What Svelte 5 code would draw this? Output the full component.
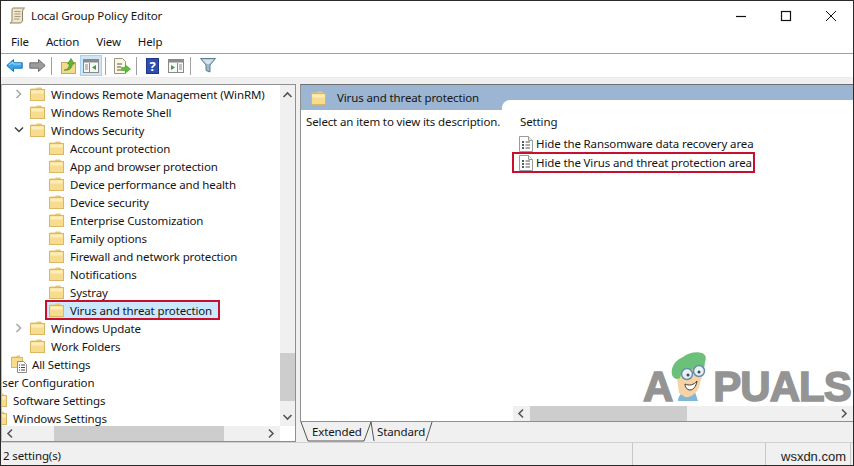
<script>
	const menus = ['File', 'Action', 'View', 'Help'];

	// level is the tree depth relative to "Windows Remote Management"; the tree is scrolled so some are cut off
	const rows = [
		{ label: 'Windows Remote Management (WinRM)', level: 0, arrow: 'closed' },
		{ label: 'Windows Remote Shell', level: 0 },
		{ label: 'Windows Security', level: 0, arrow: 'open' },
		{ label: 'Account protection', level: 1 },
		{ label: 'App and browser protection', level: 1 },
		{ label: 'Device performance and health', level: 1 },
		{ label: 'Device security', level: 1 },
		{ label: 'Enterprise Customization', level: 1 },
		{ label: 'Family options', level: 1 },
		{ label: 'Firewall and network protection', level: 1 },
		{ label: 'Notifications', level: 1 },
		{ label: 'Systray', level: 1 },
		{ label: 'Virus and threat protection', level: 1, selected: true },
		{ label: 'Windows Update', level: 0, arrow: 'closed' },
		{ label: 'Work Folders', level: 0 },
		{ label: 'All Settings', level: -1, icon: 'settings' },
		{ label: 'User Configuration', level: -3 },
		{ label: 'Software Settings', level: -2 },
		{ label: 'Windows Settings', level: -2 }
	];

	const settings = [
		{ label: 'Hide the Ransomware data recovery area' },
		{ label: 'Hide the Virus and threat protection area', marked: true }
	];
</script>

{#snippet folder()}
	<svg class="folder" width="15" height="14" viewBox="0 0 15 14">
		<path d="M1 3V1.500h5L7 .5h4l1 1V3z" fill="#e8c877" />
		<rect x=".5" y="2.500" width="14" height="11" fill="#f7dc90" stroke="#d9b765" />
		<rect x="1.500" y="3.500" width="12" height="3" fill="#fdeeb9" />
	</svg>
{/snippet}

{#snippet policy()}
	<svg class="policy" width="14" height="16" viewBox="0 0 14 16">
		<path d="M.5.500h9l4 4v11H.5z" fill="#fff" stroke="#9b9b9b" />
		<path d="M9.500.500v4h4" fill="#eee" stroke="#9b9b9b" />
		<path d="M3 6h2M3 9h2M3 12h2" stroke="#1d2a3a" stroke-width="1.600" />
		<path d="M6.500 6h4.500M6.500 9h4.500M6.500 12h4.500" stroke="#50585f" />
	</svg>
{/snippet}

<div class="window">
	<header class="titlebar">
		<svg width="17" height="17" viewBox="0 0 17 17">
			<path d="M4 1h11.500c-1.500 1-2 2.500-2 4v8c0 1.500-1 3-2.500 3H1c1.500-.5 2-1.500 2-3V3c0-1 .5-2 1-2z" fill="#f1e6c6" stroke="#8b8268" />
			<path d="M5.500 4.500h6M5.500 7h6M5.500 9.500h6M5 12h5.500" stroke="#a39a80" />
		</svg>
		<span class="title">Local Group Policy Editor</span>
		<div class="controls">
			<svg width="12" height="12" viewBox="0 0 12 12"><path d="M1 6.500h10" stroke="#111" stroke-width="1.200" /></svg>
			<svg width="12" height="12" viewBox="0 0 12 12"><rect x="1.500" y="1.500" width="9" height="9" fill="none" stroke="#111" stroke-width="1.200" /></svg>
			<svg width="12" height="12" viewBox="0 0 12 12"><path d="M1 1l10 10M11 1L1 11" stroke="#111" stroke-width="1" /></svg>
		</div>
	</header>

	<nav class="menubar">
		{#each menus as menu}
			<span>{menu}</span>
		{/each}
	</nav>

	<div class="toolbar">
		<svg class="tool" width="17" height="15" viewBox="0 0 17 15">
			<path d="M.8 7.500L7.500 1.500v3.300h8.700v5.400H7.500v3.300z" fill="#3aa6ec" stroke="#1573b8" />
			<path d="M3 7L7 4v2h8" fill="none" stroke="#a8e0fb" />
		</svg>
		<svg class="tool fwd" width="17" height="15" viewBox="0 0 17 15">
			<path d="M16.200 7.500L9.500 1.500v3.300H.8v5.400h8.700v3.300z" fill="#9c9c9c" stroke="#6d6d6d" />
		</svg>
		<i class="sep s1"></i>
		<svg class="tool up" width="15" height="17" viewBox="0 0 15 17">
			<rect x=".5" y="5.500" width="14" height="11" fill="#f3d98c" stroke="#c9a85a" />
			<path d="M3 13c3 0 5-2 5.500-6H6.500L10 1.500 13.500 7h-2c-.5 4-3 7-8.500 6z" fill="#5fb336" stroke="#3f8a22" stroke-width=".6" />
		</svg>
		<div class="active-btn">
			<svg width="16" height="14" viewBox="0 0 16 14">
				<rect x=".5" y=".5" width="15" height="13" fill="#f7f7f7" stroke="#8a8a8a" />
				<rect x="1" y="1" width="14" height="2.500" fill="#8a8a8a" />
				<path d="M6.500 4v9" stroke="#8a8a8a" />
				<path d="M2 6h3M2 8h3M2 10h3" stroke="#8a8a8a" />
				<path d="M13 6v5L9 8.500z" fill="#3d9c3d" />
			</svg>
		</div>
		<i class="sep s2"></i>
		<svg class="tool export" width="17" height="16" viewBox="0 0 17 16">
			<path d="M.5.500h8l3 3v12H.5z" fill="#fbf6e2" stroke="#9b9684" />
			<path d="M3 6h5M3 9h4M3 12h4" stroke="#56584c" />
			<path d="M7.500 9.500h4v-2.500l5 4-5 4v-2.500h-4z" fill="#5fbf3c" stroke="#3f9a26" stroke-width=".6" />
		</svg>
		<i class="sep s3"></i>
		<div class="help">?</div>
		<svg class="tool show" width="16" height="14" viewBox="0 0 16 14">
			<rect x=".5" y=".5" width="15" height="13" fill="#f7f7f7" stroke="#8a8a8a" />
			<rect x="1" y="1" width="14" height="2.500" fill="#8a8a8a" />
			<path d="M9.500 4v9" stroke="#8a8a8a" />
			<path d="M11 6h3M11 8h3M11 10h3" stroke="#8a8a8a" />
			<path d="M3 6v5l4-2.500z" fill="#3d9c3d" />
		</svg>
		<i class="sep s4"></i>
		<svg class="tool filter" width="16" height="15" viewBox="0 0 16 15">
			<path d="M.5.500h15L10 7v7l-4-1.500V7z" fill="#9fb9c9" stroke="#5d7f95" />
			<path d="M2.500 1.500h11L9.500 6h-3z" fill="#d5e4ec" />
		</svg>
	</div>

	<main class="main">
		<section class="tree">
			<div class="tree-body">
				<div class="tree-rows">
					{#each rows as row}
						<div class="row" style="margin-left: {row.level * 19 + 9}px">
							<span class="arrow">
								{#if row.arrow === 'closed'}
									<svg width="8" height="10" viewBox="0 0 8 10"><path d="M1.500 1l4 4-4 4" fill="none" stroke="#a6a6a6" stroke-width="1.500" /></svg>
								{:else if row.arrow === 'open'}
									<svg width="10" height="8" viewBox="0 0 10 8"><path d="M1 1.500l4 4 4-4" fill="none" stroke="#404040" stroke-width="1.500" /></svg>
								{/if}
							</span>
							<div class="entry" class:selected={row.selected}>
								{#if row.icon === 'settings'}
									<svg class="settings-icon" width="17" height="18" viewBox="0 0 17 18">
										<path d="M1 4V1.500h4l1-1h3v3.500z" fill="#e8c877" />
										<rect x=".5" y="2.500" width="11" height="10" fill="#f7dc90" stroke="#d9b765" />
										<path d="M6.500 6.500h6l3 3v8h-9z" fill="#fff" stroke="#8d8d8d" />
										<path d="M8 10h1M8 12.500h1M8 15h1M10 10h4M10 12.500h4M10 15h4" stroke="#444" />
									</svg>
								{:else}
									{@render folder()}
								{/if}
								<span class="label">{row.label}</span>
							</div>
						</div>
					{/each}
				</div>
				<div class="vscroll">
					<svg width="15" height="16" viewBox="0 0 15 16"><path d="M3.500 12l4-4 4 4" fill="none" stroke="#555" stroke-width="1.600" /></svg>
					<div class="vtrack"><div class="vthumb"></div></div>
					<svg width="15" height="16" viewBox="0 0 15 16"><path d="M3.500 5l4 4 4-4" fill="none" stroke="#555" stroke-width="1.600" /></svg>
				</div>
			</div>
			<div class="hscroll tree-h">
				<svg width="17" height="15" viewBox="0 0 17 15"><path d="M10 3.500l-4 4 4 4" fill="none" stroke="#555" stroke-width="1.600" /></svg>
				<div class="htrack"><div class="hthumb"></div></div>
				<svg width="17" height="15" viewBox="0 0 17 15"><path d="M6 3.500l4 4-4 4" fill="none" stroke="#555" stroke-width="1.600" /></svg>
			</div>
		</section>

		<section class="detail">
			<div class="detail-box">
				<div class="detail-head">
					{@render folder()}
					<span>Virus and threat protection</span>
				</div>
				<div class="detail-body">
					<div class="description">Select an item to view its description.</div>
					<div class="list">
						<div class="list-head">Setting</div>
						{#each settings as item}
							<div class="item" class:marked={item.marked}>
								{@render policy()}
								<span>{item.label}</span>
							</div>
						{/each}
						<div class="logo">
							<span class="logo-a">A</span>
							<svg class="mascot" width="42" height="50" viewBox="0 0 42 50">
								<path d="M8 50c0-4 2-7 5-8l12-1 3 9z" fill="#7fb7d8" />
								<path d="M6 20l3 22 6 4c6 1 12-4 14-10l5-18z" fill="#f6d3a7" />
								<path d="M2 24C0 14 8 8 13 6c5-4 13-6 19-4 3 1 5 4 3 9l-1 7c-6-1-15 1-22 3l-2 6c-3 2-6 1-8-3z" fill="#6cc17a" />
								<circle cx="17" cy="23" r="5.500" fill="#e6f2f8" stroke="#6b8da3" stroke-width="1.500" />
								<circle cx="29" cy="20" r="5.500" fill="#e6f2f8" stroke="#6b8da3" stroke-width="1.500" />
								<circle cx="18" cy="24" r="1.500" fill="#3d4a55" />
								<circle cx="29" cy="21" r="1.500" fill="#3d4a55" />
								<path d="M15 33c4 2 9 1 12-3-1 6-4 9-7 9-3 0-5-3-5-6z" fill="#fff" stroke="#4a3a30" />
							</svg>
							<span class="logo-rest">PUALS</span>
						</div>
						<div class="hscroll list-h">
							<svg width="17" height="15" viewBox="0 0 17 15"><path d="M10 3.500l-4 4 4 4" fill="none" stroke="#555" stroke-width="1.600" /></svg>
							<div class="htrack"><div class="hthumb"></div></div>
							<svg width="17" height="15" viewBox="0 0 17 15"><path d="M6 3.500l4 4-4 4" fill="none" stroke="#555" stroke-width="1.600" /></svg>
						</div>
					</div>
				</div>
			</div>
			<div class="tabs">
				<svg class="tab-lines" width="140" height="20" viewBox="0 0 140 20">
					<path d="M1 0l7 19h56l7-19" fill="none" stroke="#555" />
					<path d="M71 0l3 19M132 0l-6 19" fill="none" stroke="#555" />
				</svg>
				<span class="tab one">Extended</span>
				<span class="tab two">Standard</span>
			</div>
		</section>
	</main>

	<footer class="status">
		<span class="status-main">2 setting(s)</span>
		<span class="status-cell"></span>
		<span class="status-cell site">wsxdn.com</span>
		<span class="status-end"></span>
	</footer>
</div>

<style>
	:global(body) {
		margin: 0;
		background: #fff;
	}

	.window {
		width: 854px;
		height: 466px;
		box-sizing: border-box;
		border: 1px solid #2a2a2a;
		display: flex;
		flex-direction: column;
		background: #fff;
		font-family: 'Noto Sans', 'Open Sans', sans-serif;
		font-size: 11.5px;
		letter-spacing: -0.13px;
		color: #151515;
		overflow: hidden;
	}

	.titlebar {
		height: 29px;
		padding-bottom: 2px;
		flex: none;
		display: flex;
		align-items: center;
		padding-left: 8px;
	}

	.title {
		margin-left: 5px;
	}

	.controls {
		margin-left: auto;
		display: flex;
		gap: 33px;
		padding-right: 16px;
	}

	.menubar {
		height: 19px;
		padding-bottom: 2px;
		flex: none;
		display: flex;
		align-items: center;
		gap: 17px;
		padding-left: 10px;
		border-bottom: 1px solid #a0a0a0;
	}

	.toolbar {
		height: 23px;
		flex: none;
		display: flex;
		align-items: center;
		padding-left: 5px;
		border-bottom: 1px solid #ececec;
	}

	.tool {
		flex: none;
	}

	.fwd {
		margin-left: 6px;
	}

	.sep {
		width: 1px;
		height: 18px;
		background: #a0a0a0;
		flex: none;
	}

	.s1 {
		margin-left: 5px;
	}

	.s2 {
		margin-left: 3px;
	}

	.s3 {
		margin-left: 5px;
	}

	.s4 {
		margin-left: 6px;
	}

	.up {
		margin-left: 9px;
	}

	.active-btn {
		width: 22px;
		height: 21px;
		margin-left: 4px;
		background: #cfe6f8;
		border: 1px solid #a6d2f2;
		box-sizing: border-box;
		display: flex;
		align-items: center;
		justify-content: center;
		flex: none;
	}

	.export {
		margin-left: 8px;
	}

	.help {
		width: 13px;
		height: 16px;
		margin-left: 9px;
		background: #2d4fb0;
		border: 1px solid #1f3585;
		color: #fff;
		font-weight: 700;
		font-size: 13px;
		line-height: 15px;
		text-align: center;
		box-sizing: border-box;
		flex: none;
	}

	.show {
		margin-left: 9px;
	}

	.filter {
		margin-left: 9px;
	}

	.main {
		flex: 1;
		min-height: 0;
		display: flex;
		background: #f0f0f0;
		padding-top: 6px;
		gap: 4px;
	}

	.tree {
		width: 295px;
		flex: none;
		box-sizing: border-box;
		border: 1px solid #8f8f8f;
		border-left: 1px solid #bdbdbd;
		background: #fff;
		display: flex;
		flex-direction: column;
	}

	.tree-body {
		flex: 1;
		min-height: 0;
		display: flex;
	}

	.tree-rows {
		flex: 1;
		min-width: 0;
		overflow: hidden;
	}

	.row {
		height: 18px;
		display: flex;
		align-items: center;
		white-space: nowrap;
	}

	.arrow {
		width: 19px;
		flex: none;
		display: flex;
		justify-content: center;
		padding-right: 4px;
		box-sizing: border-box;
	}

	.entry {
		display: flex;
		align-items: center;
		gap: 6px;
		height: 18px;
	}

	.entry .settings-icon {
		margin-right: -2px;
	}

	.entry.selected {
		background: #cce8ff;
		outline: 2px solid #c8102e;
		outline-offset: -1px;
		margin-left: -3px;
		padding: 0 7px 0 3px;
	}

	.folder,
	.policy {
		flex: none;
	}

	.vscroll {
		width: 15px;
		flex: none;
		background: #f0f0f0;
		display: flex;
		flex-direction: column;
	}

	.vtrack {
		flex: 1;
		position: relative;
	}

	.vthumb {
		position: absolute;
		left: 0;
		right: 0;
		top: 252px;
		height: 48px;
		background: #cdcdcd;
	}

	.hscroll {
		height: 15px;
		flex: none;
		background: #f0f0f0;
		display: flex;
		align-items: center;
	}

	.htrack {
		flex: 1;
		height: 100%;
		position: relative;
	}

	.hthumb {
		position: absolute;
		top: 0;
		bottom: 0;
		background: #cdcdcd;
	}

	.tree-h {
		margin-right: 15px;
	}

	.tree-h .hthumb {
		left: 35px;
		width: 170px;
	}

	.list-h .hthumb {
		left: 0;
		width: 157px;
	}

	.detail {
		flex: 1;
		min-width: 0;
		display: flex;
		flex-direction: column;
	}

	.detail-box {
		flex: 1;
		min-height: 0;
		display: flex;
		flex-direction: column;
		border-top: 1px solid #6f6f6f;
		border-left: 1px solid #8f8f8f;
		border-bottom: 1px solid #8f8f8f;
		background: #fff;
	}

	.detail-head {
		height: 25px;
		flex: none;
		background: #9bb5d3;
		display: flex;
		align-items: center;
		gap: 11px;
		padding-left: 10px;
	}

	.detail-body {
		flex: 1;
		min-height: 0;
		display: flex;
	}

	.description {
		width: 201px;
		flex: none;
		box-sizing: border-box;
		padding: 4px 0 0 5px;
		white-space: nowrap;
	}

	/* the white corner of the list cuts up into the blue header */
	.list {
		flex: 1;
		min-width: 0;
		margin-top: -10px;
		background: #fff;
		border-top-left-radius: 8px;
		display: flex;
		flex-direction: column;
		position: relative;
		padding-left: 11px;
	}

	.list-head {
		height: 20px;
		margin-top: 11px;
		padding-left: 7px;
		display: flex;
		align-items: center;
		flex: none;
	}

	.item {
		height: 19px;
		display: flex;
		align-items: center;
		gap: 3px;
		padding-left: 6px;
		flex: none;
		white-space: nowrap;
		width: fit-content;
		padding-right: 2px;
	}

	.list-head + .item {
		margin-top: 3px;
	}

	.item.marked {
		outline: 2px solid #c8102e;
		outline-offset: -1px;
	}

	.list-h {
		margin-top: auto;
	}

	.logo {
		position: absolute;
		left: 141px;
		bottom: 18px;
		height: 50px;
		display: flex;
		align-items: flex-end;
		color: #949494;
		font-family: 'Liberation Sans', sans-serif;
		font-weight: 700;
		font-size: 42px;
		line-height: 32px;
		letter-spacing: 0;
		-webkit-text-stroke: 1.5px #949494;
	}

	.mascot {
		margin: 0 0 2px -3px;
		flex: none;
	}

	.logo-rest {
		margin-left: 1px;
		letter-spacing: -1px;
	}

	.tabs {
		height: 20px;
		flex: none;
		position: relative;
		display: flex;
	}

	.tab-lines {
		position: absolute;
		left: 0;
		top: 0;
	}

	.tab {
		position: absolute;
		top: 2px;
	}

	.tab.one {
		left: 12px;
	}

	.tab.two {
		left: 77px;
	}

	.status {
		height: 23px;
		flex: none;
		display: flex;
		align-items: center;
		background: #f0f0f0;
		border-top: 1px solid #d0d0d0;
		box-sizing: border-box;
	}

	.status-main {
		width: 631px;
		flex: none;
		padding: 3px 0 0 2px;
		box-sizing: border-box;
	}

	.status-cell {
		width: 133px;
		align-self: stretch;
		flex: none;
		box-sizing: border-box;
		border-left: 1px solid #c8c8c8;
	}

	.status-cell.site {
		width: 85px;
		padding: 4px 0 0 15px;
		display: flex;
		align-items: center;
		font-family: 'Liberation Sans', sans-serif;
		font-size: 13px;
		letter-spacing: 0;
		color: #222;
	}

	.status-end {
		flex: 1;
		align-self: stretch;
		border-left: 1px solid #c8c8c8;
	}
</style>
